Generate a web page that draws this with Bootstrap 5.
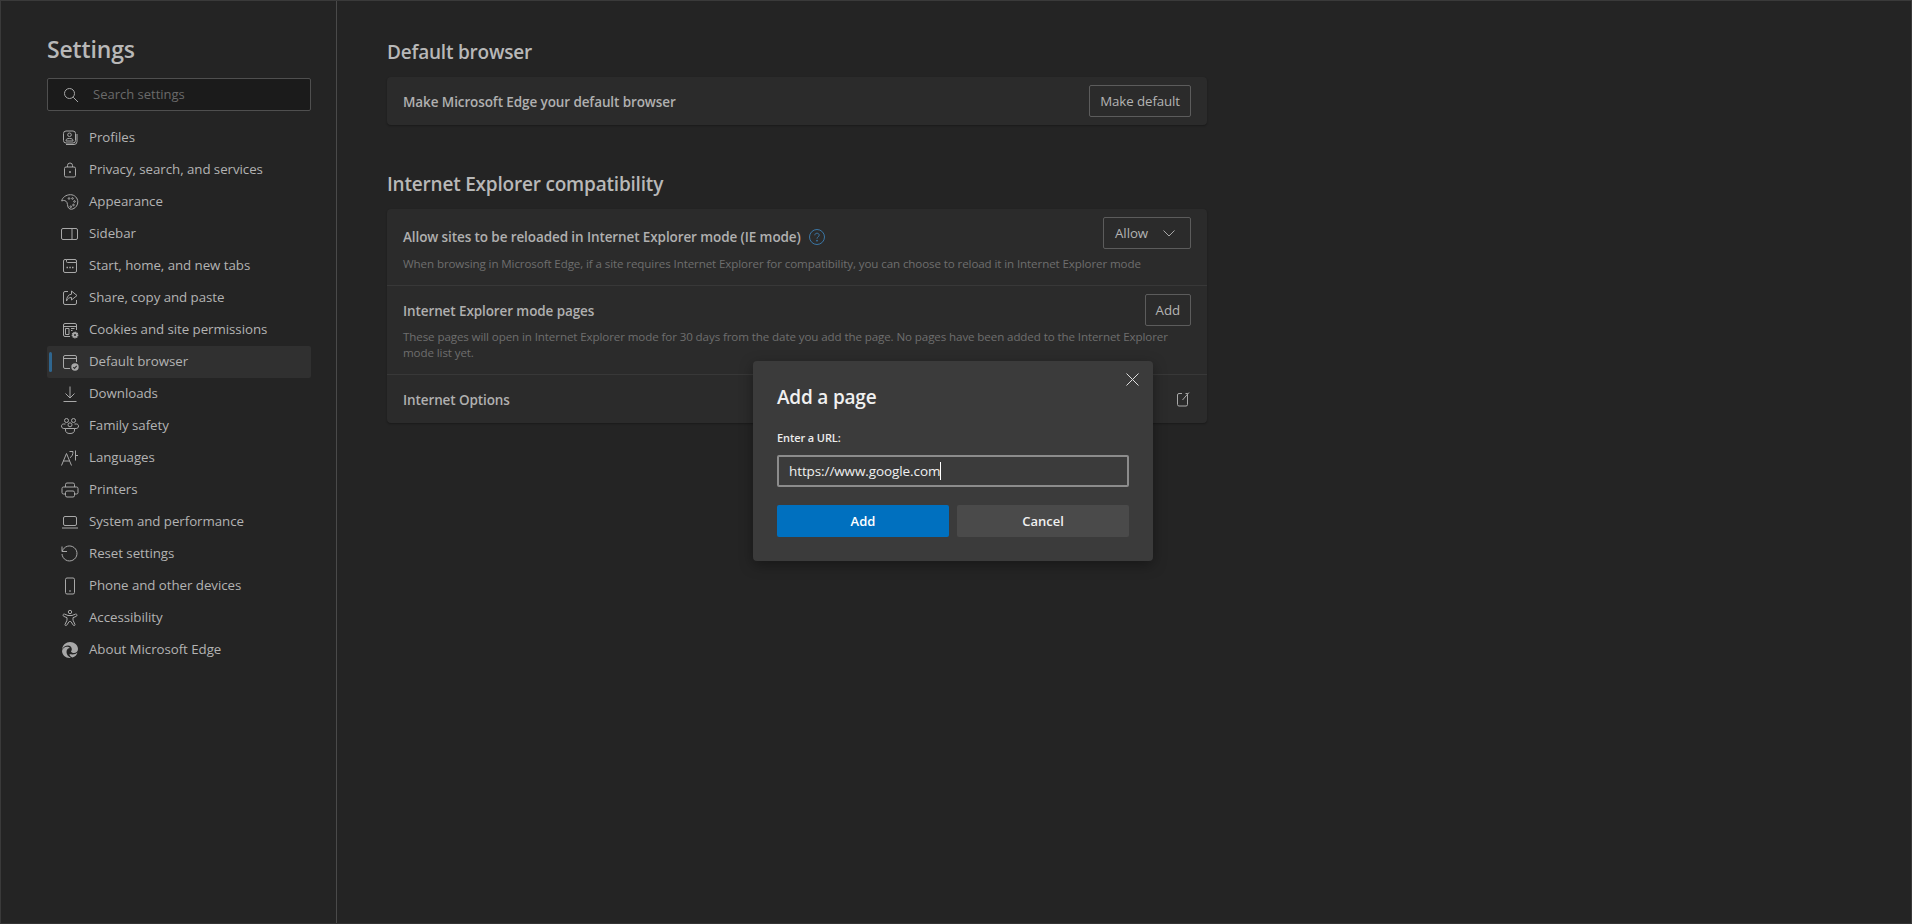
<!DOCTYPE html>
<html lang="en">
<head>
<meta charset="utf-8">
<title>Settings</title>
<link href="https://cdn.jsdelivr.net/npm/bootstrap@5.3.0/dist/css/bootstrap.min.css" rel="stylesheet">
<style>
html,body{height:100%;}
body{background:#242424;color:#b3b3b3;font-family:"Open Sans","Noto Sans",sans-serif;font-size:13px;overflow:hidden;}
.shell{height:924px;border:1px solid #3a3a3a;border-bottom-color:#333;}
.side{width:336px;flex:none;border-right:1px solid #4a4a4a;padding:0 25px 0 46px;}
.side-title{font-size:23px;font-weight:600;line-height:32px;margin:32px 0 13px;color:#b8b8b8;letter-spacing:-.15px;}
.searchbox{height:33px;background:#1b1b1b;border:1px solid #4f4f4f;border-radius:2px;padding-left:15px;gap:14px;color:#6a6a6a;margin-bottom:11px;}
.nav-row{height:32px;padding-left:15px;gap:11px;border-radius:2px;color:#b3b3b3;text-decoration:none;position:relative;white-space:nowrap;font-size:13.3px;letter-spacing:-.05px;}
.nav-row.on{background:#303030;}
.nav-row.on::before{content:"";position:absolute;left:2px;top:6px;bottom:6px;width:3px;background:#2f668f;border-radius:2px;}
.ico{width:16px;height:16px;flex:none;fill:none;stroke:#a8a8a8;stroke-width:1;overflow:visible;}
.main{padding:0 0 0 50px;flex:1;}
.col-w{width:820px;}
.head{font-size:19px;font-weight:600;line-height:28px;color:#b8b8b8;letter-spacing:-.2px;}
.head.one{margin-top:37px;margin-bottom:11px;}
.head.two{margin-top:45px;margin-bottom:11px;}
.panel{background:#2b2b2b;border-radius:4px;box-shadow:0 1px 2px rgba(0,0,0,.3);}
.row-a{padding:8px 16px;}
.row-b{padding:8px 16px 13px;}
.row-c{height:49px;padding:0 16px;}
.row-line{border-top:1px solid #383838;}
.lbl{font-weight:600;color:#b0b0b0;font-size:13.5px;letter-spacing:-.1px;line-height:18px;padding-top:1px;}
.lbl-top{margin-top:10px;}
.desc{font-size:11.6px;color:#6e6e6e;line-height:16px;letter-spacing:-.11px;}
.desc-a{margin-top:7px;}
.desc-b{margin-top:3px;}
.ghost{background:none;border:1px solid #5c5c5c;border-radius:2px;color:#b3b3b3;height:32px;font-size:13.3px;padding:0 10px;line-height:30px;letter-spacing:-.1px;}
.pick{padding:0 15px 0 11px;gap:15px;}
.dlg{position:absolute;left:753px;top:361px;width:400px;height:200px;background:#3b3b3b;border-radius:4px;padding:24px;box-shadow:0 4px 14px rgba(0,0,0,.35);color:#fff;}
.dlg-title{font-size:19px;font-weight:600;line-height:24px;margin:0 0 21px;color:#f0f0f0;letter-spacing:-.2px;}
.dlg-lab{display:block;font-size:11px;font-weight:600;line-height:16px;margin-bottom:9px;color:#ececec;letter-spacing:-.1px;}
.dlg-in{height:32px;border:2px solid #8c8c8c;border-radius:2px;padding:0 9px 0 10px;line-height:28px;font-size:13.5px;color:#f0f0f0;white-space:nowrap;letter-spacing:-.1px;margin-bottom:18px;}
.caret-bar{display:inline-block;width:1px;height:18px;background:#fff;vertical-align:-4px;}
.btn-a,.btn-c{flex:1;height:32px;border:0;border-radius:2px;color:#fff;font-size:13px;font-weight:600;padding-top:7px;line-height:18px;padding-bottom:7px;}
.btn-a{background:#0070bf;}
.btn-c{background:#4a4a4a;color:#f0f0f0;}
.x-btn{position:absolute;right:14px;top:12px;width:13px;height:13px;stroke:#dedede;fill:none;}
</style>
</head>
<body>
<div class="shell d-flex">
  <aside class="side">
    <h1 class="side-title">Settings</h1>
    <div class="searchbox d-flex align-items-center">
      <svg class="ico" viewBox="0 0 16 16"><circle cx="6.5" cy="6.5" r="5"/><path d="M10.2 10.2L15 15"/></svg>
      <span>Search settings</span>
    </div>
    <nav class="d-flex flex-column">
      <a class="nav-row d-flex align-items-center" href="#"><svg class="ico" viewBox="0 0 16 16"><rect x="1.5" y="1" width="12" height="12" rx="2.5"/><path d="M15 4v7.5a3 3 0 0 1-3 3H4"/><circle cx="7.5" cy="4.8" r="1.8"/><path d="M4 10.5c0-1.4 1.2-2 3.5-2s3.5.6 3.5 2v.5H4z"/></svg><span>Profiles</span></a>
      <a class="nav-row d-flex align-items-center" href="#"><svg class="ico" viewBox="0 0 16 16"><rect x="2.5" y="5" width="11" height="10" rx="1.5"/><path d="M5.5 5V3.5a2.5 2.5 0 0 1 5 0V5"/><circle cx="8" cy="10" r=".6" fill="#a8a8a8"/></svg><span>Privacy, search, and services</span></a>
      <a class="nav-row d-flex align-items-center" href="#"><svg class="ico" viewBox="0 0 16 16"><path d="M8.5.7C4 .7.2 3.5-.3 7c2.2-1.300 4.400-.2 5.200 1.300.8 1.500.4 3 1.100 4.700.8 2 3 2.700 5 1.900 3-1.200 4.800-4 4.800-7 0-4-3.300-7.200-7.300-7.200z"/><circle cx="7" cy="4.5" r=".8"/><circle cx="10.5" cy="4.5" r=".8"/><circle cx="12.5" cy="7.5" r=".8"/><circle cx="11.5" cy="11" r=".8"/><circle cx="8.8" cy="12.7" r=".8"/></svg><span>Appearance</span></a>
      <a class="nav-row d-flex align-items-center" href="#"><svg class="ico" viewBox="0 0 16 16"><rect x="-.5" y="2.5" width="16" height="11" rx="1.5"/><path d="M10 2.5v11"/></svg><span>Sidebar</span></a>
      <a class="nav-row d-flex align-items-center" href="#"><svg class="ico" viewBox="0 0 16 16"><path d="M3 1.500h1.500v2a1 1 0 0 0 1 1h9V13a1.500 1.500 0 0 1-1.500 1.500H3A1.500 1.500 0 0 1 1.500 13V3A1.500 1.500 0 0 1 3 1.500zM4.500 1.500H13A1.500 1.500 0 0 1 14.500 3v1.500"/><path d="M4.500 9.500h1.500M7.300 9.500h1.500M10 9.500h1.500" stroke-width="1.300"/></svg><span>Start, home, and new tabs</span></a>
      <a class="nav-row d-flex align-items-center" href="#"><svg class="ico" viewBox="0 0 16 16"><path d="M6 1.500H3A1.500 1.500 0 0 0 1.500 3v10A1.500 1.500 0 0 0 3 14.500h10a1.500 1.500 0 0 0 1.500-1.500v-3"/><path d="M9.500 1l5.500 4.500-5.500 4.500V7.500C7 7.500 5.500 8.500 4.500 11c0-4 2-6.500 5-6.800z"/></svg><span>Share, copy and paste</span></a>
      <a class="nav-row d-flex align-items-center" href="#"><svg class="ico" viewBox="0 0 16 16"><path d="M8 14.500H3A1.500 1.500 0 0 1 1.500 13V3A1.500 1.500 0 0 1 3 1.500h10A1.500 1.500 0 0 1 14.500 3v5M1.500 4.500h13"/><path d="M3.500 6.500h3.500v6H3.500zM9 6.500h3.500M9 8.500h1.500"/><circle cx="13" cy="13" r="2.700" fill="#a8a8a8" stroke-dasharray="1.200 .6" stroke-width="1.400"/><circle cx="13" cy="13" r="1" fill="#242424" stroke="none"/></svg><span>Cookies and site permissions</span></a>
      <a class="nav-row on d-flex align-items-center" href="#"><svg class="ico" viewBox="0 0 16 16"><path d="M8 14.500H3A1.500 1.500 0 0 1 1.500 13V3A1.500 1.500 0 0 1 3 1.500h10A1.500 1.500 0 0 1 14.500 3v5M1.500 4.500h13"/><circle cx="13" cy="13" r="3.700" fill="#a8a8a8" stroke="none"/><path d="M11.300 13.200l1.200 1.200 2.200-2.600" stroke="#303030" stroke-width="1.100"/></svg><span>Default browser</span></a>
      <a class="nav-row d-flex align-items-center" href="#"><svg class="ico" viewBox="0 0 16 16"><path d="M8 .5v11.500M3.500 7.500L8 12l4.500-4.500M1.500 15.500h13"/></svg><span>Downloads</span></a>
      <a class="nav-row d-flex align-items-center" href="#"><svg class="ico" viewBox="0 0 16 16"><circle cx="4.500" cy="2.500" r="2"/><circle cx="11.500" cy="2.500" r="2"/><circle cx="8" cy="6.800" r="2"/><path d="M-.5 8c0-1 .8-2 2-2h2M16.500 8c0-1-.8-2-2-2h-2M-.5 8c0 1.500 1 2.500 2.300 2.500H3.500M16.500 8c0 1.500-1 2.500-2.300 2.500H12.500M3.500 10.500h9v1.500a4.500 3.500 0 0 1-9 0z"/></svg><span>Family safety</span></a>
      <a class="nav-row d-flex align-items-center" href="#"><svg class="ico" viewBox="0 0 16 16"><path d="M-.5 15.500L4.500 3.500l5 12M1.300 11h6.400"/><path d="M7.500 1.500h3.500c0 3-1 5-3 6.200M13.500.5v10M13.500 5.500h2.500"/></svg><span>Languages</span></a>
      <a class="nav-row d-flex align-items-center" href="#"><svg class="ico" viewBox="0 0 16 16"><path d="M3.500 5V2.500a1.500 1.500 0 0 1 1.500-1.500h6a1.500 1.500 0 0 1 1.500 1.500V5"/><path d="M3.500 12H1.500A1.500 1.500 0 0 1 0 10.500V6.500A1.500 1.500 0 0 1 1.500 5h13A1.500 1.500 0 0 1 16 6.500v4a1.500 1.500 0 0 1-1.500 1.500h-2"/><rect x="3.5" y="9" width="9" height="6" rx="1.5"/></svg><span>Printers</span></a>
      <a class="nav-row d-flex align-items-center" href="#"><svg class="ico" viewBox="0 0 16 16"><rect x="1.5" y="2.5" width="13" height="9" rx="1.5"/><path d="M0 14h16"/></svg><span>System and performance</span></a>
      <a class="nav-row d-flex align-items-center" href="#"><svg class="ico" viewBox="0 0 16 16"><path d="M0 .5v5h5"/><path d="M.3 5.300A7.500 7.500 0 1 1 0 8"/></svg><span>Reset settings</span></a>
      <a class="nav-row d-flex align-items-center" href="#"><svg class="ico" viewBox="0 0 16 16"><rect x="3.5" y="0" width="9" height="16" rx="1.5"/><path d="M7 13h2"/></svg><span>Phone and other devices</span></a>
      <a class="nav-row d-flex align-items-center" href="#"><svg class="ico" viewBox="0 0 16 16"><circle cx="8" cy="2" r="1.700"/><path d="M1 5.200c0-1 1-1.400 1.800-1L6 5.500h4l3.200-1.300c.8-.4 1.800 0 1.800 1 0 .6-.4 1-.9 1.200L11 7.700v2.500l2 4.300c.3.900-1 1.600-1.600.8L8.800 11.500H7.200L4.600 15.300c-.6.800-1.900.1-1.600-.8l2-4.300V7.700L1.900 6.400C1.400 6.200 1 5.800 1 5.200z"/></svg><span>Accessibility</span></a>
      <a class="nav-row d-flex align-items-center" href="#"><svg class="ico" viewBox="0 0 16 16"><path fill="#a8a8a8" stroke="none" d="M8 0c4.400 0 8 3 8 7 0 2.500-2 4-4 4-1.500 0-3-.7-3-1.500 0-.5.800-1 .8-2.300C9.800 5 8 3.500 6 3.500 3.500 3.500 1.200 5 .1 7.200.6 3 4 0 8 0zM0 9c.4-2.500 2.500-4.300 5-4.300 1.200 0 2.300.5 3 1.300-1.800 0-3.500 1.500-3.500 4 0 2.500 1.800 4.700 4.500 5.800C4 16.500.3 13.500 0 9zM10.500 12.500c2 0 3.800-.7 5-2-.7 2.500-2.500 4.500-5 5-1.500-.3-3-1.800-3-3.500 1 .3 1.900.5 3 .5z"/></svg><span>About Microsoft Edge</span></a>
    </nav>
  </aside>
  <main class="main">
    <div class="col-w">
      <h2 class="head one">Default browser</h2>
      <section class="panel">
        <div class="row-a d-flex justify-content-between align-items-center">
          <span class="lbl">Make Microsoft Edge your default browser</span>
          <button class="ghost" type="button">Make default</button>
        </div>
      </section>
      <h2 class="head two">Internet Explorer compatibility</h2>
      <section class="panel">
        <div class="row-b">
          <div class="d-flex justify-content-between align-items-start">
            <span class="lbl lbl-top d-flex align-items-center gap-2">Allow sites to be reloaded in Internet Explorer mode (IE mode)
              <svg width="16" height="16" viewBox="0 0 16 16" fill="none" stroke="#3b77a6"><circle cx="8" cy="8" r="7.5"/><path d="M5.800 6.300c0-1.300 1-2.100 2.200-2.100s2.200.8 2.200 2c0 1.700-2.200 1.600-2.200 3.500"/><circle cx="8" cy="11.700" r=".5" fill="#3b77a6"/></svg>
            </span>
            <button class="ghost pick d-flex align-items-center" type="button">Allow <svg width="12" height="12" viewBox="0 0 12 12" fill="none" stroke="#a8a8a8"><path d="M.5 3.500L6 9l5.500-5.500"/></svg></button>
          </div>
          <div class="desc desc-a">When browsing in Microsoft Edge, if a site requires Internet Explorer for compatibility, you can choose to reload it in Internet Explorer mode</div>
        </div>
        <div class="row-b row-line">
          <div class="d-flex justify-content-between align-items-center">
            <span class="lbl">Internet Explorer mode pages</span>
            <button class="ghost" type="button">Add</button>
          </div>
          <div class="desc desc-b">These pages will open in Internet Explorer mode for 30 days from the date you add the page. No pages have been added to the Internet Explorer mode list yet.</div>
        </div>
        <div class="row-c row-line d-flex justify-content-between align-items-center">
          <span class="lbl">Internet Options</span>
          <svg class="ico" viewBox="0 0 16 16"><path d="M7 2.500H4A1.500 1.500 0 0 0 2.500 4v9.500A1.500 1.500 0 0 0 4 15H11a1.500 1.500 0 0 0 1.500-1.500V2.500h-2"/><path d="M7.500 9L14 1.500"/></svg>
        </div>
      </section>
    </div>
  </main>
</div>
<div class="dlg" role="dialog">
  <svg class="x-btn" viewBox="0 0 13 13"><path d="M.5.500l12 12M12.500.500l-12 12"/></svg>
  <h3 class="dlg-title">Add a page</h3>
  <label class="dlg-lab">Enter a URL:</label>
  <div class="dlg-in">https://www.google.com<span class="caret-bar"></span></div>
  <div class="d-flex gap-2">
    <button class="btn-a" type="button">Add</button>
    <button class="btn-c" type="button">Cancel</button>
  </div>
</div>
<script src="https://cdn.jsdelivr.net/npm/bootstrap@5.3.0/dist/js/bootstrap.bundle.min.js"></script>
</body>
</html>
